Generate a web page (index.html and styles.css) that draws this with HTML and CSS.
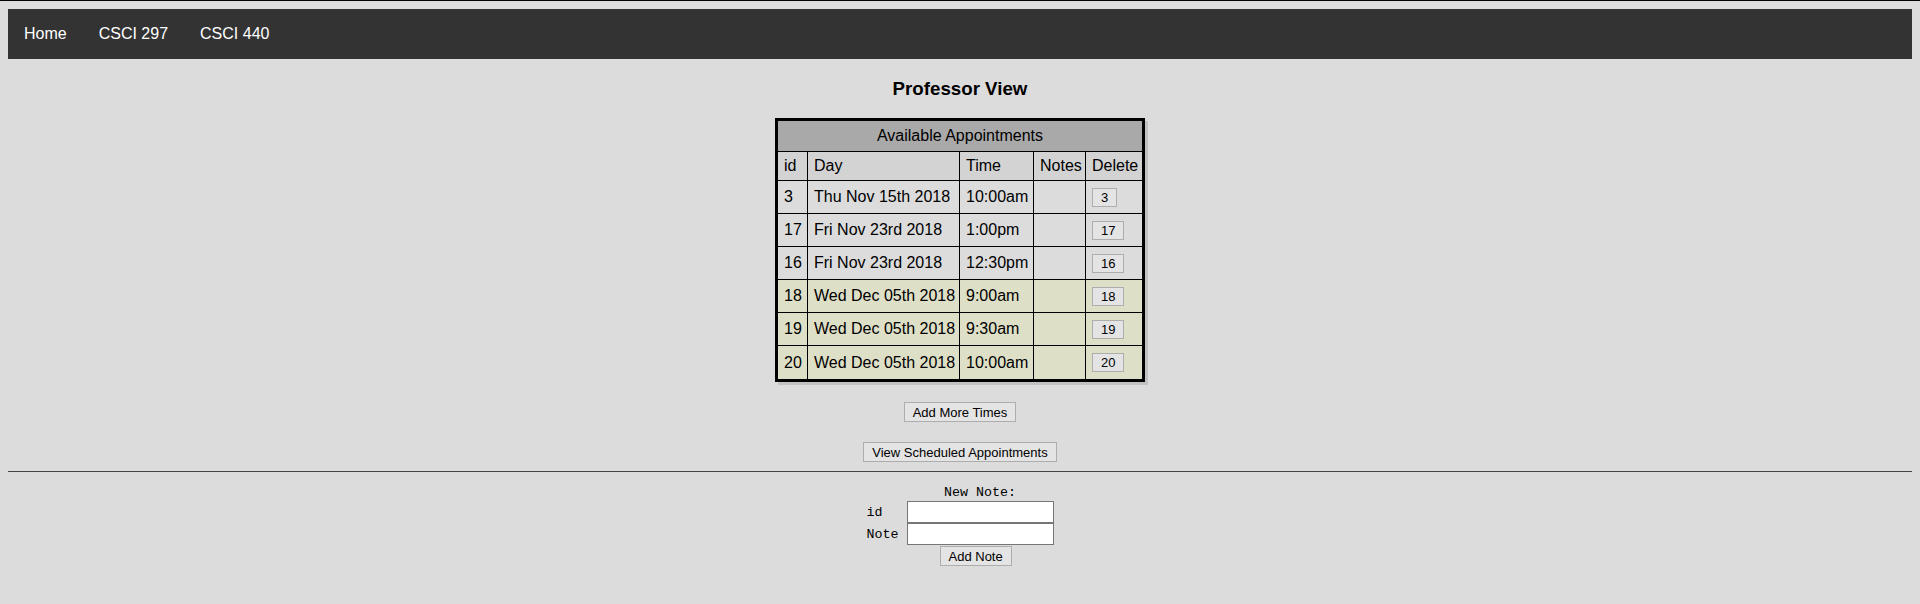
FILE: index.html
```html
<!DOCTYPE html>
<html lang="en">
<head>
<meta charset="utf-8">
<title>Professor View</title>
<link rel="stylesheet" href="styles.css">
</head>
<body>
<nav class="topnav">
  <ul class="nav-list">
    <li><a class="nav-link" href="#">Home</a></li>
    <li><a class="nav-link" href="#">CSCI 297</a></li>
    <li><a class="nav-link" href="#">CSCI 440</a></li>
  </ul>
</nav>

<main class="content">
  <h3 class="page-title">Professor View</h3>

  <table class="appts">
    <colgroup>
      <col class="c-id"><col class="c-day"><col class="c-time"><col class="c-notes"><col class="c-del">
    </colgroup>
    <tr class="caption-row"><th colspan="5">Available Appointments</th></tr>
    <tr class="head-row"><th>id</th><th>Day</th><th>Time</th><th>Notes</th><th>Delete</th></tr>
    <tr><td>3</td><td>Thu Nov 15th 2018</td><td>10:00am</td><td></td><td><button class="btn">3</button></td></tr>
    <tr><td>17</td><td>Fri Nov 23rd 2018</td><td>1:00pm</td><td></td><td><button class="btn">17</button></td></tr>
    <tr><td>16</td><td>Fri Nov 23rd 2018</td><td>12:30pm</td><td></td><td><button class="btn">16</button></td></tr>
    <tr class="hl"><td>18</td><td>Wed Dec 05th 2018</td><td>9:00am</td><td></td><td><button class="btn">18</button></td></tr>
    <tr class="hl"><td>19</td><td>Wed Dec 05th 2018</td><td>9:30am</td><td></td><td><button class="btn">19</button></td></tr>
    <tr class="hl"><td>20</td><td>Wed Dec 05th 2018</td><td>10:00am</td><td></td><td><button class="btn">20</button></td></tr>
  </table>

  <div class="action action-first"><button class="btn">Add More Times</button></div>
  <div class="action"><button class="btn">View Scheduled Appointments</button></div>
</main>

<hr class="divider">

<form class="note-form">
  <div class="form-title">New Note:</div>
  <label class="form-label" for="note-id">id</label>
  <input class="form-input" id="note-id" type="text">
  <label class="form-label" for="note-text">Note</label>
  <input class="form-input" id="note-text" type="text">
  <button class="btn form-submit" type="button">Add Note</button>
</form>
</body>
</html>
```

FILE: styles.css
```css
html {
  background: #dcdcdc;
  border-top: 1px solid #000;
}

body {
  margin: 8px;
  font-family: "Liberation Sans", Arial, sans-serif;
  font-size: 16px;
  color: #000;
  background: #dcdcdc;
}

.topnav {
  background: #333333;
}

.nav-list {
  list-style: none;
  margin: 0;
  padding: 0;
  height: 50px;
  display: flex;
  align-items: center;
}

.nav-link {
  display: block;
  padding: 0 16px;
  color: #ffffff;
  text-decoration: none;
  font-size: 16px;
}

.content {
  display: flex;
  flex-direction: column;
  align-items: center;
}

.page-title {
  margin: 18.72px 0;
  font-size: 18.72px;
  font-weight: bold;
  text-align: center;
}

.appts {
  table-layout: fixed;
  width: 370px;
  border-collapse: separate;
  border-spacing: 0;
  border: 3px solid #000;
  box-shadow: 3px 3px 0 #c2c2c2;
  background: #dcdcdc;
}

.c-id { width: 30px; }
.c-day { width: 152px; }
.c-time { width: 74px; }
.c-notes { width: 52px; }
.c-del { width: 56px; }

.appts th,
.appts td {
  box-sizing: border-box;
  height: 33px;
  padding: 0 6px;
  border-right: 1px solid #000;
  border-bottom: 1px solid #000;
  font-weight: normal;
  text-align: left;
  vertical-align: middle;
  white-space: nowrap;
}

.appts th:last-child,
.appts td:last-child {
  border-right: none;
}

.appts tr:last-child td {
  border-bottom: none;
}

.caption-row th {
  height: 31px;
  background: #a9a9a9;
  text-align: center;
}

.head-row th {
  height: 29px;
  background: #d3d3d3;
}

.hl td {
  background: #dedfc7;
}

.btn {
  box-sizing: border-box;
  height: 20px;
  padding: 0 8px;
  margin: 0;
  font-family: "Liberation Sans", Arial, sans-serif;
  font-size: 13px;
  color: #000;
  background: #e4e4e4;
  border: 1px solid #adadad;
  border-radius: 0;
}

.appts .btn {
  height: 19px;
}

.action {
  display: flex;
  justify-content: center;
  margin-top: 20px;
}

.divider {
  margin: 9px 0 0;
  border: none;
  border-top: 1px solid #444;
  height: 0;
}

.note-form {
  margin-top: 13px;
  display: grid;
  grid-template-columns: 40px 147px;
  grid-template-rows: 16px 22px 22px auto;
  justify-content: center;
  font-family: "Liberation Mono", "Courier New", monospace;
  font-size: 13.33px;
}

.form-title {
  grid-column: 2;
  text-align: center;
  line-height: 16px;
}

.form-label {
  grid-column: 1;
  align-self: center;
}

.form-input {
  grid-column: 2;
  box-sizing: border-box;
  width: 147px;
  height: 22px;
  margin: 0;
  padding: 1px 2px;
  border: 1px solid #767676;
  background: #fff;
  font-family: "Liberation Mono", "Courier New", monospace;
}

.form-submit {
  grid-column: 2;
  justify-self: start;
  margin: 1px 0 0 33px;
}
```
